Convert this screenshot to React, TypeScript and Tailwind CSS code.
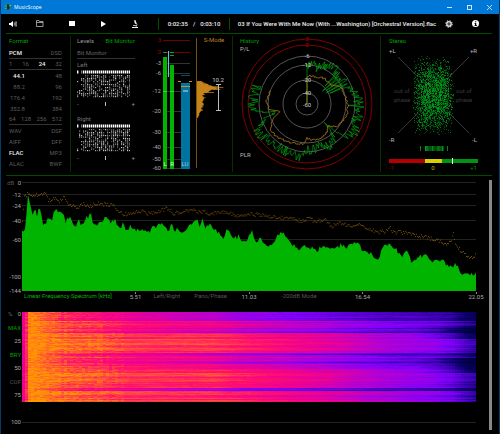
import type { ReactNode } from "react";
import clsx from "clsx";

type Point = [number, number];

// small seeded generator, so the plots are the same on every render
function createRandom(seed: number) {
  let s = seed;
  return () => {
    s = (s + 0x6d2b79f5) | 0;
    let t = Math.imul(s ^ (s >>> 15), 1 | s);
    t = (t + Math.imul(t ^ (t >>> 7), 61 | t)) ^ t;
    return ((t ^ (t >>> 14)) >>> 0) / 4294967296;
  };
}

function interpolate(points: Point[], x: number) {
  if (x <= points[0][0]) return points[0][1];
  for (let i = 1; i < points.length; i++) {
    const [x0, y0] = points[i - 1];
    const [x1, y1] = points[i];
    if (x <= x1) return y0 + ((y1 - y0) * (x - x0)) / (x1 - x0);
  }
  return points[points.length - 1][1];
}

/* ---------- data ---------- */

const SPECTRUM: Point[] = [
  [0, 47], [2, 52], [3, 46], [5, 25], [6, 12], [8, 24], [11, 33], [13, 26], [15, 32], [17, 23], [19, 30],
  [21, 41], [23, 41], [26, 35], [30, 37], [34, 24], [36, 32], [41, 30], [43, 39], [48, 36], [53, 46], [57, 37],
  [59, 44], [64, 34], [66, 35], [68, 30], [71, 40], [74, 44], [78, 40], [83, 35], [88, 40], [93, 38], [98, 48],
  [101, 40], [104, 50], [108, 43], [114, 47], [121, 47], [126, 49], [131, 45], [137, 43], [143, 42], [147, 49],
  [149, 40], [151, 47], [161, 48], [167, 43], [174, 36], [177, 43], [180, 37], [183, 45], [187, 42], [194, 49],
  [201, 55], [204, 49], [211, 54], [215, 55], [216, 52], [221, 62], [226, 54], [228, 51], [229, 49], [234, 59],
  [238, 57], [242, 62], [248, 62], [254, 55], [260, 50], [264, 54], [268, 59], [273, 66], [281, 64], [286, 64],
  [294, 69], [298, 64], [308, 64], [314, 65], [319, 62], [324, 65], [335, 60], [339, 67], [345, 69], [356, 77],
  [359, 66], [366, 62], [371, 65], [379, 74], [385, 69], [388, 79], [394, 75], [402, 72], [409, 80], [414, 76],
  [424, 81], [429, 84], [433, 81], [437, 89], [446, 92], [448, 90], [453, 92],
];

const PEAKS: Point[] = [
  [0, 37], [2, 15], [6, 10], [11, 13], [18, 12], [22, 11], [26, 18], [32, 15], [36, 20], [41, 15], [46, 22],
  [54, 25], [61, 22], [66, 25], [74, 21], [91, 23], [94, 29], [101, 32], [111, 30], [121, 28], [124, 32],
  [134, 29], [144, 26], [151, 31], [164, 28], [178, 29], [188, 32], [198, 30], [208, 31], [218, 34], [228, 32],
  [241, 33], [251, 35], [271, 37], [281, 39], [287, 35], [291, 39], [302, 38], [309, 44], [314, 41], [328, 43],
  [336, 41], [342, 46], [356, 50], [361, 49], [367, 45], [369, 50], [384, 50], [388, 52], [401, 55], [414, 58],
  [423, 62], [428, 60], [430, 49], [432, 62], [438, 69], [449, 76], [453, 72],
];

const HISTORY_PEAK: Point[] = [
  [0, 38], [8, 42], [15, 38], [26, 42], [36, 47], [42, 42], [68, 42], [75, 50], [90, 52], [100, 54], [110, 51],
  [120, 55], [128, 53], [133, 42], [137, 30], [142, 44], [150, 49], [165, 44], [180, 47], [187, 53], [205, 51],
  [220, 50], [232, 55], [242, 57], [248, 48], [252, 42], [255, 28], [258, 40], [262, 53], [275, 54], [291, 53],
];

const HISTORY_RMS: Point[] = [
  [0, 28], [20, 29], [38, 31], [50, 30], [62, 37], [70, 38], [80, 40], [95, 41], [110, 41], [125, 38], [137, 30],
  [143, 34], [155, 36], [170, 37], [180, 34], [186, 40], [200, 41], [220, 44], [232, 45], [242, 41], [255, 27],
  [262, 38], [275, 41], [291, 38],
];

const HISTOGRAM: Point[] = [
  [0, 4], [3, 11], [5, 15], [6, 26], [7, 23], [8, 21], [9, 12], [11, 16], [12, 8], [15, 6], [17, 8],
  [20, 5], [23, 7], [26, 5], [29, 5], [31, 3], [34, 2], [36, 1],
];

const METER_SCALE = [
  { label: "3", y: 4, red: true },
  { label: "0", y: 16, red: true },
  { label: "-3", y: 27 },
  { label: "-6", y: 37 },
  { label: "-12", y: 55 },
  { label: "-20", y: 75 },
  { label: "-30", y: 96 },
  { label: "-40", y: 111 },
  { label: "-50", y: 123 },
  { label: "-60", y: 132 },
];

const RINGS = [
  { label: "3", r: 65, red: true },
  { label: "0", r: 59, red: true },
  { label: "-6", r: 48 },
  { label: "-12", r: 39 },
  { label: "-20", r: 24 },
  { label: "-40", r: 11 },
];

const DB_SCALE = [
  { label: "0", y: 0 },
  { label: "-12", y: 12 },
  { label: "-24", y: 23 },
  { label: "-40", y: 38 },
  { label: "-60", y: 57 },
  { label: "-100", y: 94 },
  { label: "-144", y: 108 },
];

// how quiet each band of the spectrogram is, by row
const QUIET_ROWS: Point[] = [
  [0, 1], [8, 0.95], [9, 0.45], [15, 0.5], [16, 0.75], [18, 0.6], [20, 1], [21, 0], [40, 0.05], [41, 0.9],
  [42, 1.2], [43, 0.5], [48, 0.4], [50, 1], [51, 0.9], [52, 0.2], [54, 0.55], [56, 0.5], [57, 0], [75, 0.05],
  [76, 1], [78, 1.1], [79, 0.1], [90, 0],
];

const QUIET_DEPTH: Point[] = [
  [0, 0], [12, 0.02], [20, 0.06], [50, 0.12], [110, 0.18], [150, 0.24], [220, 0.34], [300, 0.3], [453, 0.14],
];

const LOUDNESS: Point[] = [
  [0, 0.68], [2, 0.74], [4, 0.95], [8, 0.99], [18, 0.98], [32, 0.95], [50, 0.92], [84, 0.9], [98, 0.86],
  [130, 0.85], [190, 0.85], [225, 0.8], [260, 0.74], [300, 0.67], [330, 0.6], [360, 0.53], [410, 0.45],
  [428, 0.38], [442, 0.28], [453, 0.22],
];

const HEAT: [number, number, number, number][] = [
  [0, 0, 0, 60],
  [0.15, 12, 0, 110],
  [0.28, 70, 0, 190],
  [0.42, 130, 0, 250],
  [0.56, 186, 0, 205],
  [0.68, 235, 0, 150],
  [0.8, 255, 16, 110],
  [0.9, 255, 84, 54],
  [1, 255, 152, 0],
];

function heatColor(v: number) {
  const t = Math.min(1, Math.max(0, v));
  const i = Math.max(1, HEAT.findIndex((h) => t <= h[0]));
  const a = HEAT[i - 1];
  const b = HEAT[i];
  const k = (t - a[0]) / (b[0] - a[0]);
  const mix = (n: number) => Math.round(a[n] + (b[n] - a[n]) * k);
  return `rgb(${mix(1)},${mix(2)},${mix(3)})`;
}

/* ---------- chrome ---------- */

function IconButton({ label, className, children }: { label: string; className?: string; children: ReactNode }) {
  return (
    <button type="button" aria-label={label} className={clsx("flex h-full items-center justify-center", className)}>
      {children}
    </button>
  );
}

function TitleBar() {
  return (
    <header className="flex h-[14px] items-center bg-[#0078d7] pl-[3px]">
      <svg width="8" height="8" viewBox="0 0 16 16" aria-hidden="true">
        <circle cx="8" cy="8" r="7.5" fill="#1b7f86" />
        <path d="M6 3h4v5h2l-2 5H5l2-3H5z" fill="#0a2e38" />
        <path d="M3 5l2 2M3 11l2-1M12 4l1 2" stroke="#6fd3a8" strokeWidth="2" />
      </svg>
      <h1 className="ml-[2px] flex-1 font-['Open_Sans',sans-serif] text-[5px] leading-none">MusicScope</h1>
      <IconButton label="Minimize" className="w-5">
        <svg width="5" height="5"><path d="M0 2.5h5" stroke="#cfe6fa" /></svg>
      </IconButton>
      <IconButton label="Maximize" className="w-5">
        <svg width="5" height="5"><rect x="0.5" y="0.5" width="4" height="4" fill="none" stroke="#cfe6fa" /></svg>
      </IconButton>
      <IconButton label="Close" className="w-5">
        <svg width="5" height="5"><path d="M0 0l5 5M5 0L0 5" stroke="#e6f2fc" strokeWidth="0.8" /></svg>
      </IconButton>
    </header>
  );
}

function Toolbar() {
  return (
    <div className="flex h-5 items-center border-b border-[#004d00]">
      <IconButton label="Volume" className="w-[18px] pr-1">
        <svg width="8" height="6" viewBox="0 0 16 12">
          <path d="M0 4h3l5-4v12L3 8H0z" fill="#fff" />
          <path d="M10 3q2 3 0 6M12 1.500q3 4.500 0 9M14 .5q4 5.500 0 11" fill="none" stroke="#ddd" strokeWidth="1.300" />
        </svg>
      </IconButton>
      <IconButton label="Open" className="w-8">
        <svg width="8" height="7" viewBox="0 0 16 14">
          <path d="M1 13V1h5l1 2h7v10zM1 5h13" fill="none" stroke="#bbb" strokeWidth="1.600" />
        </svg>
      </IconButton>
      <IconButton label="Stop" className="w-8">
        <svg width="6" height="5"><rect width="6" height="5" fill="#fff" /></svg>
      </IconButton>
      <IconButton label="Play" className="w-8">
        <svg width="5" height="6"><path d="M0 0l5 3-5 3z" fill="#fff" /></svg>
      </IconButton>
      <IconButton label="Analyze" className="w-8">
        <svg width="6" height="8" viewBox="0 0 12 16">
          <path d="M4 1l3-1 2 7-3 1zM2 10h7v1.500H2zM0 14h12v2H0z" fill="#eee" />
          <path d="M8 5q4 4 0 9" fill="none" stroke="#ddd" strokeWidth="1.500" />
        </svg>
      </IconButton>
      <div className="ml-[7px] flex h-3 w-[72px] items-center justify-center gap-[5px] border-x border-[#004d00] font-['Roboto',sans-serif] font-medium text-[#eee]">
        <span>0:02:35</span>
        <span>/</span>
        <span>0:03:10</span>
      </div>
      <p className="flex-1 whitespace-nowrap pl-2 font-['Roboto',sans-serif] font-medium text-[#eee]">
        03 If You Were With Me Now (With ...Washington) [Orchestral Version].flac
      </p>
      <IconButton label="Settings" className="w-[26px]">
        <svg width="8" height="8" viewBox="-7 -7 14 14">
          <circle r="3.800" fill="none" stroke="#ddd" strokeWidth="2.500" />
          <circle r="5.600" fill="none" stroke="#ccc" strokeWidth="2" strokeDasharray="2.200 2.200" />
          <circle r="1.200" fill="#ddd" />
        </svg>
      </IconButton>
      <IconButton label="Info" className="mr-1 w-[26px]">
        <svg width="7" height="7" viewBox="0 0 14 14">
          <circle cx="7" cy="7" r="7" fill="#fff" />
          <path d="M6 2.500h2.500v2H6zM5 6h3.500v4.500H10V12H5v-1.500h1V7.500H5z" fill="#000" />
        </svg>
      </IconButton>
    </div>
  );
}

/* ---------- top panels ---------- */

function FormatRow({ items, active, line, indent }: { items: string[]; active?: string; line?: boolean; indent?: boolean }) {
  return (
    <li className={clsx("flex h-[11px] items-center justify-between", line && "border-b border-[#333]")}>
      {items.map((item, i) => (
        <span
          key={item}
          className={clsx(
            item === active ? "font-medium text-[#eee]" : "text-[#5c5c5c]",
            indent && i === 0 && "w-4 text-right",
          )}
        >
          {item}
        </span>
      ))}
    </li>
  );
}

function FormatPanel() {
  return (
    <section className="border-r border-[#003300] pr-2 pl-[3px]">
      <h2 className="mb-[2px] flex h-[10px] items-center text-[#00a000]">Format</h2>
      <ul>
        <FormatRow items={["PCM", "DSD"]} active="PCM" line />
        <FormatRow items={["1", "16", "24", "32"]} active="24" line />
        <FormatRow items={["44.1", "48"]} active="44.1" indent />
        <FormatRow items={["88.2", "96"]} indent />
        <FormatRow items={["176.4", "192"]} indent />
        <FormatRow items={["352.8", "384"]} indent />
        <FormatRow items={["64", "128", "256", "512"]} line />
        <FormatRow items={["WAV", "DSF"]} />
        <FormatRow items={["AIFF", "DFF"]} />
        <FormatRow items={["FLAC", "MP3"]} active="FLAC" />
        <FormatRow items={["ALAC", "BWF"]} />
      </ul>
    </section>
  );
}

function BitMonitor({ channel, seed }: { channel: string; seed: number }) {
  const random = createRandom(seed);
  const cols = Array.from({ length: 27 }, (_, i) => i);
  const rows = Array.from({ length: 15 }, (_, i) => i);
  return (
    <div className="mb-1">
      <h3 className="flex h-[11px] items-center text-[#777]">{channel}</h3>
      <svg width="53" height="28" className="block">
        {cols.map((c) =>
          c === 1 ? null : <rect key={c} x={c * 2} y={0.5} width={1.4} height={3} fill={c === 2 ? "#777" : "#fff"} />,
        )}
        {cols.map((c) =>
          rows.map((r) => {
            const v = random();
            if (v < (c < 3 ? 0.65 : 0.3)) return null;
            const shade = Math.round(v * 210);
            return (
              <rect key={`${c}-${r}`} x={c * 2} y={5 + r * 1.5} width={1.2} height={1.2} fill={`rgb(${shade},${shade},${shade})`} />
            );
          }),
        )}
      </svg>
      <div className="flex h-[11px] items-center justify-between text-[#999]">
        <span>-</span>
        <span className="h-1 w-px bg-[#bbb]" />
        <span>+</span>
      </div>
    </div>
  );
}

function LevelsPanel() {
  return (
    <div className="w-[58px]">
      <div className="mb-[2px] flex h-[10px] items-center justify-between">
        <button type="button" className="text-[#999]">Levels</button>
        <button type="button" className="text-[#00a000]">Bit Monitor</button>
      </div>
      <h2 className="flex h-[11px] items-center border-b border-[#333] text-[#666]">Bit Monitor</h2>
      <BitMonitor channel="Left" seed={11} />
      <BitMonitor channel="Right" seed={29} />
    </div>
  );
}

function Meter() {
  const random = createRandom(5);
  const bars = Array.from({ length: 73 }, (_, i) => {
    const y = i / 2;
    return { y: 45 + y, w: interpolate(HISTOGRAM, y) * (0.75 + random() * 0.4) };
  });
  return (
    <svg width="87" height="136" className="block text-[6px]">
      {METER_SCALE.map((s) => (
        <g key={s.label}>
          <text x="16" y={s.y + 2} textAnchor="end" fill={s.red ? "#a00000" : "#aaa"}>{s.label}</text>
          <path d={`M18 ${s.y + 0.5}H45`} stroke={s.red ? "#700000" : "#333"} />
        </g>
      ))}
      <rect x="18" y="21" width="4" height="112" fill="#00b400" />
      <rect x="25" y="29" width="4" height="104" fill="#00b400" />
      <path d="M18 16.500h4M25 16.500h4M25 19.500h4" stroke="#00a040" />
      <path d="M18 55.500h4M25 55.500h4" stroke="#4be04b" strokeWidth="0.7" />
      <path d="M23.500 15v26" stroke="#5fc8e8" />
      <rect x="36" y="47" width="9" height="86" fill="#0073a0" />
      <path d="M36 39.500h9" stroke="#005070" />
      <path d="M36 50.500h9M33 45.500h3M44 45.500h3" stroke="#d09020" />
      <path d="M38 55h5" stroke="#cde" />
      <text x="20" y="130" textAnchor="middle" fill="#cfc">L</text>
      <text x="27" y="130" textAnchor="middle" fill="#cfc">R</text>
      <text x="40" y="130" textAnchor="middle" fill="#acd">LU</text>

      <path d="M51.500 2V132" stroke="#7a5210" />
      <text x="69" y="6" textAnchor="middle" fill="#c08020">S-Mode</text>
      {bars.map((b) => (
        <rect key={b.y} x="52" y={b.y} width={b.w} height="0.6" fill="#f0a020" />
      ))}
      <text x="73" y="46" textAnchor="middle" fill="#ccc">10.2</text>
      <path d="M73.500 49v26M71 48.500h5M71 74.500h5" stroke="#bbb" />
    </svg>
  );
}

function polar(deg: number, r: number) {
  const a = (deg * Math.PI) / 180;
  return `${(74 + Math.sin(a) * r).toFixed(1)},${(68 - Math.cos(a) * r).toFixed(1)}`;
}

function HistoryPanel() {
  const random = createRandom(17);
  const peak: string[] = ["74,68"];
  const rms: string[] = ["74,68"];
  for (let d = 0; d <= 291; d += 1) {
    let r = interpolate(HISTORY_PEAK, d) + (random() - 0.5) * 11;
    // breaks in the music pull the trace far inwards
    if (d > 42 && d < 68 && d % 5 === 0) r = 20 + random() * 8;
    if (d === 92) r = 41;
    peak.push(polar(d, r));
    if (d % 2 === 0) rms.push(polar(d, interpolate(HISTORY_RMS, d) + (random() - 0.5) * 2.5));
  }
  return (
    <section className="border-r border-[#003300]">
      <svg width="147" height="136" className="block text-[6px]">
        <text x="7" y="7" fill="#00a000">History</text>
        <text x="7" y="15" fill="#bbb">P/L</text>
        <text x="7" y="121" fill="#bbb">PLR</text>
        {RINGS.map((ring) => (
          <circle key={ring.label} cx="74" cy="68" r={ring.r} fill="none" stroke={ring.red ? "#800000" : "#555"} />
        ))}
        <polyline points={peak.join(" ")} fill="none" stroke="#00a010" strokeWidth="0.7" />
        <polyline points={rms.join(" ")} fill="none" stroke="#b07818" strokeWidth="0.8" />
        {RINGS.map((ring) => (
          <text key={ring.label} x="74" y={70 - ring.r} textAnchor="middle" fill={ring.red ? "#b00000" : "#ccc"}>
            {ring.label}
          </text>
        ))}
        <text x="74" y="71" textAnchor="middle" fill="#ccc">-60</text>
      </svg>
    </section>
  );
}

function StereoPanel() {
  const random = createRandom(43);
  const dots = Array.from({ length: 3000 }, () => {
    const y = 59 + (random() + random() - 1) * 29 + (random() < 0.5 ? -11 : 11);
    return { x: 52 + (random() * 1.4 + random() * 0.6 - 1) * 21, y, o: 0.1 + random() * 0.6 };
  });
  const ticks = Array.from({ length: 16 }, (_, i) => ({ x: 44 + i * 1.2, o: 0.4 + random() * 0.6 }));
  return (
    <section>
      <svg width="106" height="136" className="block text-[6px]">
        <text x="8" y="7" fill="#00a000">Stereo</text>
        <path d="M17 21l20 20M88 21L68 41M17 97l20-20M88 97L68 77" stroke="#383838" />
        {dots.map((d, i) => (
          <rect key={i} x={Math.round(d.x)} y={Math.round(d.y)} width="1" height="1" fill="#00a81c" opacity={d.o} />
        ))}
        <g fill="#bbb">
          <text x="8" y="17">+L</text>
          <text x="96" y="17" textAnchor="end">+R</text>
          <text x="8" y="106">-R</text>
          <text x="96" y="106" textAnchor="end">-L</text>
        </g>
        <g fill="#3c3c3c">
          <text x="13" y="57">out of</text>
          <text x="13" y="66">phase</text>
          <text x="75" y="57">out of</text>
          <text x="75" y="66">phase</text>
        </g>
        {ticks.map((t) => (
          <rect key={t.x} x={t.x} y="110" width="1" height="5" fill="#00c020" opacity={t.o} />
        ))}
        <path d="M39.500 110v5M66.500 110v5" stroke="#008a14" />
        <rect x="8" y="123" width="36" height="4" fill="#b40000" />
        <rect x="44" y="123" width="17" height="4" fill="#d8d000" />
        <rect x="61" y="123" width="36" height="4" fill="#009410" />
        <rect x="71" y="122" width="1" height="6" fill="#fff" />
        <text x="8" y="134" fill="#a00000">-1</text>
        <text x="52" y="134" textAnchor="middle" fill="#c0b800">0</text>
        <text x="96" y="134" textAnchor="end" fill="#008a10">+1</text>
      </svg>
    </section>
  );
}

/* ---------- spectrum ---------- */

function Spectrum() {
  const random = createRandom(71);
  const heights = Array.from({ length: 303 }, (_, i) => {
    const x = i * 1.5;
    return `L${x} ${(interpolate(SPECTRUM, x) + (random() - 0.4) * 5).toFixed(1)}`;
  });
  const dots = Array.from({ length: 453 }, (_, x) => ({ x, y: interpolate(PEAKS, x) + (random() - 0.5) * 4 }));
  return (
    <section aria-label="Spectrum">
      <div className="flex">
        <svg width="16" height="109" className="shrink-0 overflow-visible">
          <text x="1" y="3" fill="#555">dB</text>
          {DB_SCALE.map((s) => (
            <text key={s.label} x="15" y={s.y + 3} textAnchor="end" fill="#aaa">{s.label}</text>
          ))}
        </svg>
        <svg viewBox="0 0 453 109" preserveAspectRatio="none" className="h-[109px] min-w-0 flex-1">
          {DB_SCALE.slice(0, 5).map((s) => (
            <path key={s.label} d={`M0 ${s.y + 0.5}H453`} stroke="#222" />
          ))}
          <path d={`M0 109${heights.join("")}L453 92V109Z`} fill="#00b400" />
          {dots.map((d) => (
            <rect key={d.x} x={d.x} y={d.y} width="1" height="0.8" fill="#946408" />
          ))}
        </svg>
      </div>
      <div className="ml-4 grid h-[10px] grid-cols-4 items-center text-[#555]">
        <div className="flex items-center justify-between pl-[2px]">
          <button type="button" className="whitespace-nowrap text-[#00b400]">Linear Frequency Spectrum [kHz]</button>
          <AxisTick>5.51</AxisTick>
        </div>
        <div className="flex items-center justify-between pl-[18px]">
          <button type="button">Left/Right</button>
          <button type="button">Pano/Phase</button>
          <AxisTick>11.03</AxisTick>
        </div>
        <div className="flex items-center justify-between pl-8">
          <button type="button">-200dB Mode</button>
          <AxisTick>16.54</AxisTick>
        </div>
        <div className="flex items-center justify-end">
          <AxisTick>22.05</AxisTick>
        </div>
      </div>
    </section>
  );
}

function AxisTick({ children }: { children: ReactNode }) {
  return (
    <div className="-mr-2 flex w-4 flex-col items-center text-[#aaa]">
      <span className="h-[2px] w-px bg-[#888]" />
      <span>{children}</span>
    </div>
  );
}

function SpectrogramCells() {
  const random = createRandom(97);
  const colNoise = Array.from({ length: 151 }, () => random() - 0.5);
  const rows = Array.from({ length: 90 }, (_, r) => r);
  return rows.map((r) => {
    const quiet = interpolate(QUIET_ROWS, r);
    const rowNoise = (random() - 0.5) * 0.1;
    let drift = 0;
    return colNoise.map((cn, c) => {
      const x = c * 3;
      drift = drift * 0.8 + (random() - 0.5) * 0.03;
      let v = interpolate(LOUDNESS, x) + rowNoise * (x > 30 ? 1 : 0.3) + drift;
      v -= quiet * interpolate(QUIET_DEPTH, x);
      v += x < 100 ? cn * 0.03 + (random() - 0.5) * 0.08 : (random() - 0.5) * 0.015;
      // two soft dips at the top end
      if (x > 390 && (Math.abs(r - 20) < 7 || Math.abs(r - 53) < 8)) v -= ((x - 390) / 63) * 0.14;
      return <rect key={`${r}-${c}`} x={x} y={r} width="3" height="1" fill={heatColor(v)} />;
    });
  });
}

function Spectrogram() {
  return (
    <section aria-label="Spectrogram" className="mt-[11px]">
      <div className="flex">
        <div className="-mt-[2px] flex h-[89px] w-4 flex-col justify-between pr-px text-right leading-[8px] text-[#aaa]">
          <span className="flex justify-between pl-[2px]">
            <span className="text-[#666]">%</span>
            <span>0</span>
          </span>
          <button type="button" className="self-end text-[#00a000]">MAX</button>
          <span>25</span>
          <button type="button" className="self-end text-[#00a000]">BRY</button>
          <span>50</span>
          <button type="button" className="self-end text-[#555]">COF</button>
          <span>75</span>
        </div>
        <svg
          viewBox="0 0 453 90"
          preserveAspectRatio="none"
          shapeRendering="crispEdges"
          className="h-[90px] min-w-0 flex-1"
        >
          <SpectrogramCells />
        </svg>
      </div>
      <div className="mt-4 flex h-[8px] items-center">
        <span className="w-4 pr-px text-right text-[#aaa]">100</span>
        <span className="h-px flex-1 bg-[#222]" />
      </div>
    </section>
  );
}

export default function App() {
  return (
    <div className="flex min-h-screen flex-col border-x border-b border-[#003c6c] bg-black font-['Roboto','Liberation_Sans',sans-serif] text-[6px] leading-none text-white">
      <TitleBar />
      <main className="flex flex-1 flex-col pr-[7px] pl-[5px]">
        <Toolbar />
        <div className="grid grid-cols-[65fr_162fr_148fr_111fr] border-b border-[#004d00] pt-[2px] pb-[3px]">
          <FormatPanel />
          <section className="flex justify-between border-r border-[#003300] pl-[6px]">
            <LevelsPanel />
            <Meter />
          </section>
          <HistoryPanel />
          <StereoPanel />
        </div>
        <div className="flex flex-1 justify-between gap-[13px] pt-1 pb-1">
          <div className="min-w-0 flex-1 pt-[2px] pb-1">
            <Spectrum />
            <Spectrogram />
          </div>
          <div className="w-[3px] bg-[#888]" />
        </div>
      </main>
    </div>
  );
}
